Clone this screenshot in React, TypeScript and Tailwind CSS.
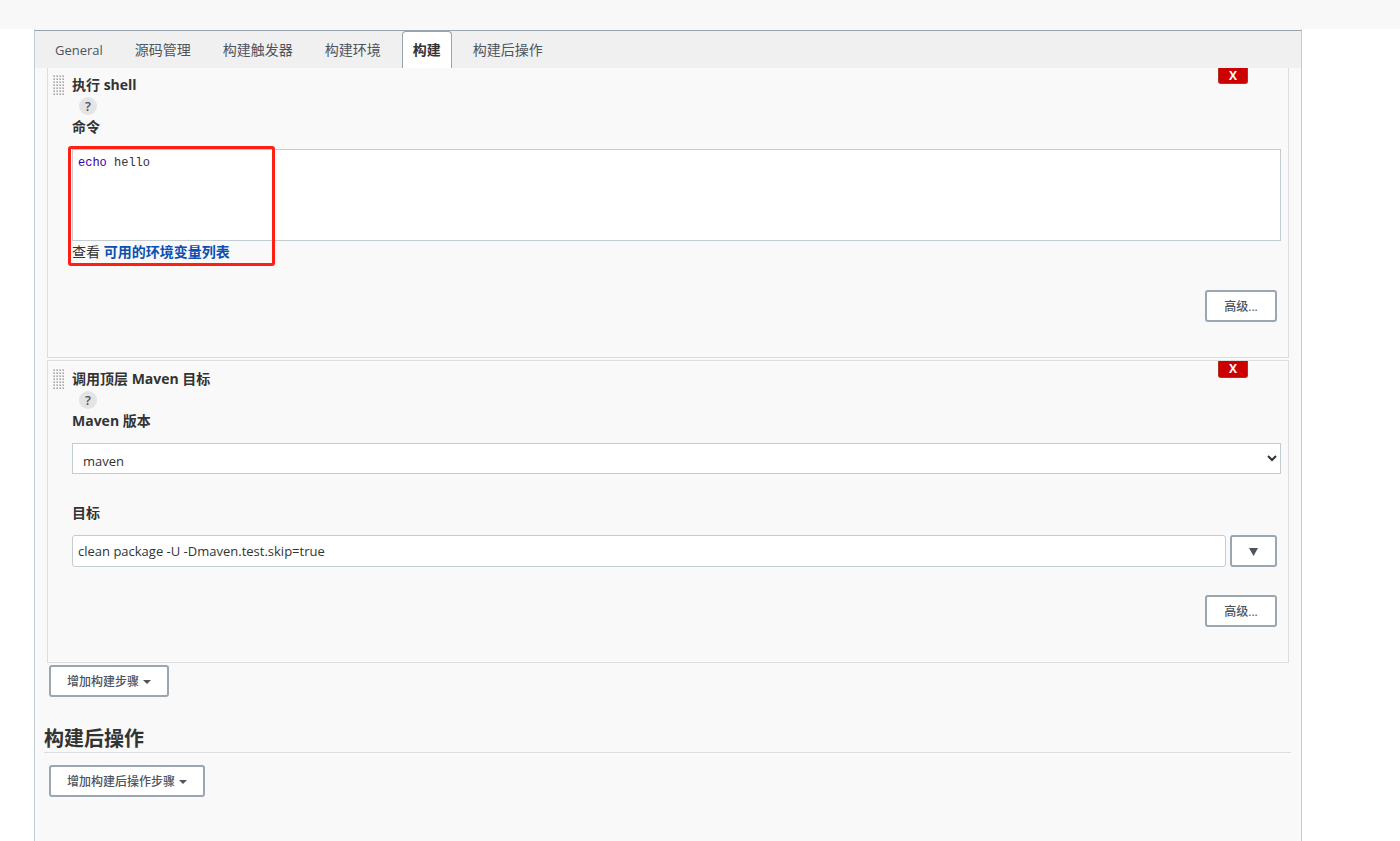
import { useState } from 'react';
import type { ReactNode } from 'react';

const tabs = ['General', '源码管理', '构建触发器', '构建环境', '构建', '构建后操作'];

const buttonStyles = `
  flex h-8 items-center justify-center rounded-[3px]
  border-2 border-[#9aa6b1] bg-white
  text-xs font-medium text-[#4d545d]
`;

const fieldStyles = 'border border-[#c3ccd1] bg-white text-[13px] text-[#333333]';

function DragHandle() {
  return (
    <svg width="12" height="21" viewBox="0 0 12 21" aria-hidden="true">
      <defs>
        <pattern id="dots" width="3" height="3" patternUnits="userSpaceOnUse">
          <rect width="2" height="2" fill="#cfcfcf" />
          <rect x="1" y="1" width="1" height="1" fill="#a4a4a4" />
        </pattern>
      </defs>
      <rect width="12" height="21" fill="url(#dots)" />
    </svg>
  );
}

function Caret() {
  return (
    <svg width="8" height="4" viewBox="0 0 8 4" aria-hidden="true">
      <path d="M0 0h8L4 4z" fill="#4d545d" />
    </svg>
  );
}

interface BuildStepProps {
  title: string;
  first?: boolean;
  children: ReactNode;
}

function BuildStep({ title, first = false, children }: BuildStepProps) {
  return (
    <section
      className={`mx-3 border-[#dddddd] pb-[35px] pl-[5px] pr-[7px] ${
        first ? 'border-x border-b' : 'mt-0.5 border'
      }`}
    >
      <div className="flex items-start justify-between">
        <div className={`flex gap-[7px] ${first ? 'pt-[7px]' : 'pt-2'}`}>
          <DragHandle />
          <h2 className="text-sm font-bold leading-5">{title}</h2>
        </div>
        <button
          type="button"
          aria-label="删除"
          className={`mr-[33px] flex w-[30px] items-center justify-center rounded-b-[3px]
            border border-t-0 border-[#b3331f] bg-[#cc0000] text-xs font-bold text-white
            ${first ? 'h-4' : 'h-[17px]'}`}
        >
          X
        </button>
      </div>
      <div className="pl-[19px] pt-px">
        <button
          type="button"
          aria-label="帮助"
          className="ml-[7px] flex size-[18px] items-center justify-center rounded-full bg-[#e4e4e4] text-[13px] font-semibold text-[#4d545d]"
        >
          ?
        </button>
        {children}
      </div>
    </section>
  );
}

export default function App() {
  const [activeTab, setActiveTab] = useState('构建');
  const [script, setScript] = useState('echo hello');
  const [goals, setGoals] = useState('clean package -U -Dmaven.test.skip=true');

  return (
    <div className="flex min-h-screen flex-col bg-white font-['Open_Sans','Noto_Sans_CJK_SC',sans-serif] text-sm text-[#333333]">
      <header className="h-[29px] bg-[#f8f8f8]" />

      <main className="ml-[34px] mr-[98px] flex-1 border-x border-[#c3ccd1] bg-[#f9f9f9] pt-px">
        <nav className="flex h-[38px] gap-[10px] border-t border-[#98a5ae] bg-[#f0f0f0] pl-[9px]">
          {tabs.map((tab) => (
            <button
              key={tab}
              type="button"
              onClick={() => setActiveTab(tab)}
              className={`rounded-t border border-b-0 px-[10px] ${
                tab === 'General' ? 'text-[13px]' : 'text-sm'
              } ${
                tab === activeTab
                  ? 'border-[#98a5ae] bg-white font-bold text-[#333333]'
                  : 'border-transparent text-[#4d545d]'
              }`}
            >
              {tab}
            </button>
          ))}
        </nav>

        <BuildStep title="执行 shell" first>
          <label htmlFor="command" className="mt-0.5 block font-bold leading-5">
            命令
          </label>
          {/* Script editor with the highlighted region */}
          <div className="relative mt-3">
            <div className="relative h-[92px] border border-[#c3ccd1] bg-white font-['Liberation_Mono',monospace] text-xs leading-4">
              <pre aria-hidden="true" className="px-[5px] py-[5px] font-[inherit]">
                <span className="text-[#3300aa]">{script.split(' ')[0]}</span>
                {script.slice(script.split(' ')[0].length)}
              </pre>
              <textarea
                id="command"
                value={script}
                onChange={(e) => setScript(e.target.value)}
                className="absolute inset-0 size-full resize-none bg-transparent px-[5px] py-[5px] text-transparent caret-black outline-none"
              />
            </div>
            <p className="leading-[22px]">
              查看{' '}
              <a href="#env-vars" className="font-bold text-[#0b4fb3]">
                可用的环境变量列表
              </a>
            </p>
            <div className="pointer-events-none absolute -left-1 -top-[3px] h-[120px] w-[207px] rounded-[3px] border-3 border-[#ff2015]" />
          </div>
          <div className="mt-[27px] flex justify-end pr-1">
            <button type="button" className={`${buttonStyles} w-[72px] pt-0.5`}>
              高级...
            </button>
          </div>
        </BuildStep>

        <BuildStep title="调用顶层 Maven 目标">
          <label htmlFor="maven-version" className="mt-0.5 block font-bold leading-5">
            Maven 版本
          </label>
          <select
            id="maven-version"
            className={`${fieldStyles} mt-3 block h-[31px] w-full px-1.5 pt-1`}
          >
            <option>maven</option>
          </select>
          <label htmlFor="goals" className="mt-[29px] block font-bold leading-5">
            目标
          </label>
          <div className="mt-3 flex gap-1 pr-1">
            <input
              id="goals"
              type="text"
              value={goals}
              onChange={(e) => setGoals(e.target.value)}
              className={`${fieldStyles} h-8 min-w-0 flex-1 rounded-[3px] px-[5px]`}
            />
            <button type="button" aria-label="展开" className={`${buttonStyles} w-[47px] pt-0.5`}>
              <svg width="9" height="8" viewBox="0 0 9 8" aria-hidden="true">
                <path d="M0 0h9L4.5 8z" fill="#4d545d" />
              </svg>
            </button>
          </div>
          <div className="mt-7 flex justify-end pr-1">
            <button type="button" className={`${buttonStyles} w-[72px] pt-0.5`}>
              高级...
            </button>
          </div>
        </BuildStep>

        <div className="mt-0.5 pl-3.5">
          <button type="button" className={`${buttonStyles} gap-1 px-4 pt-0.5`}>
            增加构建步骤
            <Caret />
          </button>
        </div>

        <h2 className="ml-[9px] mr-[10px] mt-7 border-b border-[#dddddd] text-xl font-bold leading-[27px]">
          构建后操作
        </h2>
        <div className="mt-3 pl-3.5">
          <button type="button" className={`${buttonStyles} gap-1 px-4 pt-0.5`}>
            增加构建后操作步骤
            <Caret />
          </button>
        </div>
      </main>
    </div>
  );
}
